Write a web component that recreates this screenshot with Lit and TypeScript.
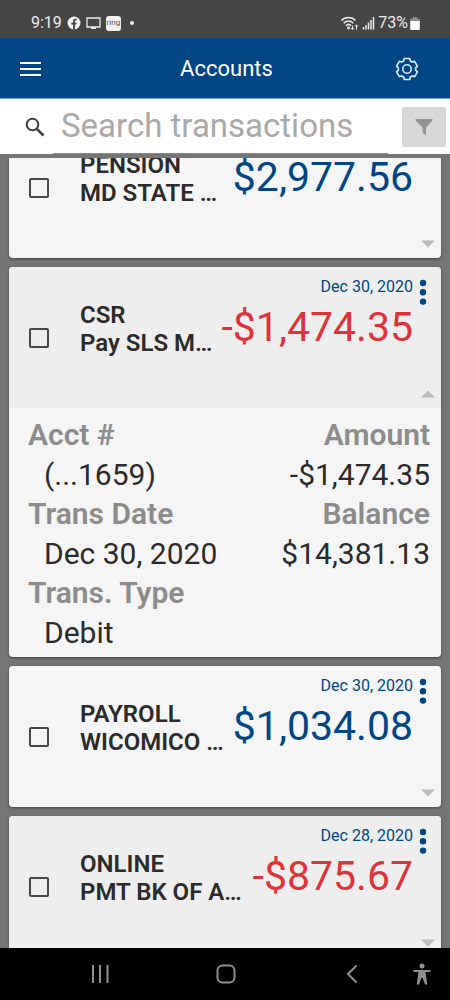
import { LitElement, html, svg, css, nothing } from "lit";
import { customElement, property, query } from "lit/decorators.js";
import { classMap } from "lit/directives/class-map.js";

interface Detail {
  label: string;
  value: string;
}

interface Transaction {
  id: string;
  title: string;
  memo: string;
  date: string;
  amount: string;
  details?: Detail[];
}

const TRANSACTIONS: Transaction[] = [
  { id: "t1", title: "PENSION", memo: "MD STATE …", date: "Dec 31, 2020", amount: "$2,977.56" },
  {
    id: "t2",
    title: "CSR",
    memo: "Pay SLS M…",
    date: "Dec 30, 2020",
    amount: "-$1,474.35",
    details: [
      { label: "Acct #", value: "(...1659)" },
      { label: "Amount", value: "-$1,474.35" },
      { label: "Trans Date", value: "Dec 30, 2020" },
      { label: "Balance", value: "$14,381.13" },
      { label: "Trans. Type", value: "Debit" },
    ],
  },
  { id: "t3", title: "PAYROLL", memo: "WICOMICO …", date: "Dec 30, 2020", amount: "$1,034.08" },
  { id: "t4", title: "ONLINE", memo: "PMT BK OF A…", date: "Dec 28, 2020", amount: "-$875.67" },
];

/* Outline of a six-toothed gear on a 24-unit grid. */
function gearPath(): string {
  const points: string[] = [];
  const teeth = 6;
  const step = (Math.PI * 2) / teeth;
  for (let i = 0; i < teeth; i++) {
    const mid = i * step - Math.PI / 2;
    const corners: [number, number][] = [
      [-0.4, 8.7],
      [-0.26, 10.8],
      [0.26, 10.8],
      [0.4, 8.7],
    ];
    for (const [offset, radius] of corners) {
      const x = 12 + Math.cos(mid + offset) * radius;
      const y = 12 + Math.sin(mid + offset) * radius;
      points.push(`${x.toFixed(2)} ${y.toFixed(2)}`);
    }
  }
  return `M${points.join("L")}Z`;
}

@customElement("status-bar")
class StatusBar extends LitElement {
  static styles = css`
    :host {
      display: flex;
      align-items: center;
      justify-content: space-between;
      height: 38px;
      box-sizing: border-box;
      padding: 8px 30px 0 31px;
      background: #454545;
      color: #ececec;
      font-size: 16px;
      line-height: 20px;
    }
    .group {
      display: flex;
      align-items: center;
    }
    .left {
      gap: 5px;
    }
    .right {
      gap: 3px;
    }
    .level {
      display: flex;
      align-items: center;
      gap: 2px;
    }
    .ring {
      width: 15px;
      height: 15px;
      border-radius: 3px;
      background: #f2f2f2;
      color: #555;
      font-size: 8px;
      line-height: 14px;
      text-align: center;
    }
    .dot {
      width: 4px;
      height: 4px;
      margin-left: 4px;
      border-radius: 50%;
      background: #f2f2f2;
    }
    svg {
      display: block;
    }
  `;
  render() {
    return html`
      <div class="group left">
        <span>9:19</span>
        <svg width="14" height="14" viewBox="0 0 14 14">
          <circle cx="7" cy="7" r="6.5" fill="#f2f2f2" />
          <path d="M6 13.6V8.6H4.3V6.7H6V5.3C6 3.6 7 2.8 8.4 2.8h1.3v1.7h-.9c-.7 0-.9.4-.9.9v1.3h1.7l-.3 1.9H7.9v5z" fill="#454545" />
        </svg>
        <svg width="15" height="14" viewBox="0 0 15 14">
          <path d="M1 2h13v9H1zM5 12.4h5" fill="none" stroke="#ececec" stroke-width="1.3" />
        </svg>
        <div class="ring">ring</div>
        <div class="dot"></div>
      </div>
      <div class="group right">
        <svg width="18" height="15" viewBox="0 0 18 15">
          <g fill="none" stroke="#ececec" stroke-width="1.500">
            <path d="M.5 4.400C4.200 .6 10.800 .6 14.500 4.400M2.700 7.200c2.800-2.800 6.800-2.800 9.600 0M4.900 9.700c1.500-1.500 3.700-1.500 5.200 0" />
          </g>
          <circle cx="7.500" cy="12" r="1.400" fill="#ececec" />
          <path d="M11.500 9.500v4M10 12l1.500 1.800L13 12M15.500 13.500V9M14 10.600l1.500-1.800 1.500 1.800" fill="none" stroke="#ececec" />
        </svg>
        <svg width="13" height="14" viewBox="0 0 13 14">
          <path d="M1.500 11v2.500M4 9v4.500M6.500 6.500v7M9 4v9.500M11.500 1v12.500" stroke="#ececec" stroke-width="1.500" />
        </svg>
        <div class="level">
          <span>73%</span>
          <svg width="10" height="15" viewBox="0 0 10 15">
            <path d="M3 1h4v1.500h2a.8.8 0 01.8.8V6H.2V3.300a.8.8 0 01.8-.8h2z" fill="#8b8b8b" />
            <path d="M.2 5h9.600v8.200a.8.8 0 01-.8.8H1a.8.8 0 01-.8-.8z" fill="#fff" />
          </svg>
        </div>
      </div>
    `;
  }
}

@customElement("title-bar")
class TitleBar extends LitElement {
  static styles = css`
    :host {
      display: grid;
      grid-template-columns: 1fr auto 1fr;
      align-items: center;
      height: 61px;
      box-sizing: border-box;
      padding: 2px 31px 0 20px;
      background: #004684;
      border-bottom: 1px solid #6f9cc2;
      color: #fff;
    }
    h1 {
      margin: 0;
      padding-left: 14px;
      font-size: 22px;
      line-height: 28px;
      font-weight: 400;
    }
    button {
      padding: 0;
      border: 0;
      background: none;
    }
    .settings {
      justify-self: end;
    }
    .menu {
      justify-self: start;
    }
    svg {
      display: block;
    }
  `;
  render() {
    return html`
      <button class="menu" aria-label="Menu">
        <svg width="21" height="16" viewBox="0 0 21 16">
          <path d="M0 2h21M0 8h21M0 14h21" stroke="#fff" stroke-width="2" />
        </svg>
      </button>
      <h1>Accounts</h1>
      <button class="settings" aria-label="Settings">
        <svg width="24" height="24" viewBox="0 0 24 24" fill="none" stroke="#d9efff" stroke-width="1.600" stroke-linejoin="round">
          <path d=${gearPath()} />
          <circle cx="12" cy="12" r="4.200" />
        </svg>
      </button>
    `;
  }
}

@customElement("search-bar")
class SearchBar extends LitElement {
  static styles = css`
    :host {
      display: flex;
      align-items: center;
      height: 59px;
      box-sizing: border-box;
      padding: 0 4px 0 25px;
      background: #fff;
      border-bottom: 4px solid #757575;
    }
    label {
      flex: none;
      width: 28px;
    }
    svg {
      display: block;
    }
    input {
      flex: 1;
      min-width: 0;
      align-self: stretch;
      box-sizing: border-box;
      margin-right: 14px;
      padding: 0 8px 2px;
      border: 0;
      border-bottom: 1px solid #8a8a8a;
      border-radius: 0;
      outline: 0;
      background: none;
      color: #333;
      font: inherit;
      font-size: 33px;
    }
    input::placeholder {
      color: #a9a9a9;
      opacity: 1;
    }
    button {
      display: grid;
      place-items: center;
      width: 44px;
      height: 40px;
      padding: 0;
      border: 0;
      border-radius: 2px;
      background: #d5d8d7;
    }
  `;
  render() {
    return html`
      <label for="search" aria-label="Search">
        <svg width="20" height="20" viewBox="0 0 20 20" fill="none" stroke="#3c3c3c">
          <circle cx="7.500" cy="7.500" r="5.800" stroke-width="2" />
          <path d="M11.800 11.800L18.500 18.500" stroke-width="2.500" />
        </svg>
      </label>
      <input id="search" type="text" placeholder="Search transactions" />
      <button aria-label="Filter">
        <svg width="18" height="18" viewBox="0 0 18 18">
          <path d="M.5 1h17v1.500L11 9.500V17.500L7.500 14.500v-5L.5 2.500z" fill="#929594" />
        </svg>
      </button>
    `;
  }
}

@customElement("transaction-card")
class TransactionCard extends LitElement {
  @property({ attribute: false }) item!: Transaction;
  @property({ type: Boolean }) shaded = false;

  static styles = css`
    :host {
      display: block;
      flex: none;
      overflow: hidden;
      border-radius: 4px;
      background: #f5f5f5;
      box-shadow: 0 1px 3px rgba(0, 0, 0, 0.45);
    }
    .head {
      display: grid;
      grid-template-columns: 51px minmax(0, 1fr) auto 28px;
      height: 141px;
      padding-left: 20px;
    }
    .shaded {
      background: #eeeeee;
    }
    input {
      appearance: none;
      align-self: center;
      width: 20px;
      height: 20px;
      margin: 0;
      border: 2px solid #484848;
      border-radius: 2px;
    }
    .name {
      padding-top: 34px;
      color: #2b2b2b;
      font-size: 24px;
      line-height: 28px;
      font-weight: 600;
      white-space: nowrap;
    }
    .name span {
      display: block;
    }
    .sum {
      display: flex;
      flex-direction: column;
      align-items: flex-end;
      padding-top: 10px;
      color: #004684;
    }
    .date {
      font-size: 16px;
      line-height: 20px;
    }
    .amount {
      font-size: 41px;
      line-height: 60px;
    }
    .debit {
      color: #de3338;
    }
    .side {
      display: flex;
      flex-direction: column;
      justify-content: space-between;
      align-items: flex-end;
      padding: 12px 6px 10px 0;
    }
    button {
      padding: 0;
      border: 0;
      background: none;
    }
    .more {
      margin-right: 8px;
    }
    svg {
      display: block;
    }
    dl {
      display: grid;
      grid-template-columns: 1fr 1fr;
      margin: 0;
      padding: 7px 11px 5px 19px;
      font-size: 30px;
    }
    .pair:nth-child(even) {
      text-align: right;
    }
    dt {
      color: #8c8c8c;
      line-height: 40px;
      font-weight: 600;
    }
    dd {
      margin: 0;
      color: #2b2b2b;
      line-height: 39px;
    }
    .pair:nth-child(odd) dd {
      padding-left: 16px;
    }
  `;

  render() {
    const { id, title, memo, date, amount, details } = this.item;
    const arrow = details ? svg`<path d="M0 7.500L7 .5L14 7.500z" fill="#bcbcbc" />` : svg`<path d="M0 .5h14L7 7.500z" fill="#bcbcbc" />`;
    return html`
      <div class=${classMap({ head: true, shaded: this.shaded })}>
        <input type="checkbox" id=${id} aria-label=${title} />
        <label class="name" for=${id}><span>${title}</span><span>${memo}</span></label>
        <div class="sum">
          <span class="date">${date}</span>
          <span class=${classMap({ amount: true, debit: amount.startsWith("-") })}>${amount}</span>
        </div>
        <div class="side">
          <button class="more" aria-label="More">
            <svg width="8" height="26" viewBox="0 0 8 26" fill="#004684">
              <circle cx="4" cy="4" r="3.200" /><circle cx="4" cy="13.300" r="3.200" /><circle cx="4" cy="22.600" r="3.200" />
            </svg>
          </button>
          <button aria-label="Toggle details">
            <svg width="14" height="8" viewBox="0 0 14 8">${arrow}</svg>
          </button>
        </div>
      </div>
      ${details
        ? html`<dl>
            ${details.map((d) => html`<div class="pair"><dt>${d.label}</dt><dd>${d.value}</dd></div>`)}
          </dl>`
        : nothing}
    `;
  }
}

@customElement("nav-bar")
class NavBar extends LitElement {
  static styles = css`
    :host {
      display: grid;
      grid-template-columns: 200fr 52fr 198fr;
      align-items: center;
      height: 52px;
      background: #000;
    }
    .end {
      display: flex;
      align-items: center;
      justify-content: flex-end;
      gap: 55px;
      padding-right: 19px;
    }
    button {
      justify-self: center;
      padding: 0;
      border: 0;
      background: none;
    }
    svg {
      display: block;
      fill: none;
      stroke: #8f8f8f;
      stroke-width: 2;
    }
  `;
  render() {
    return html`
      <button aria-label="Recent apps">
        <svg width="18" height="20" viewBox="0 0 18 20"><path d="M2 1v18M9 1v18M16.500 1v18" /></svg>
      </button>
      <button aria-label="Home">
        <svg width="20" height="20" viewBox="0 0 20 20"><rect x="1.500" y="1.500" width="17" height="17" rx="5" /></svg>
      </button>
      <div class="end">
        <button aria-label="Back">
          <svg width="12" height="20" viewBox="0 0 12 20"><path d="M10.500 1.500L2 10l8.500 8.500" /></svg>
        </button>
        <button aria-label="Accessibility">
          <svg width="18" height="22" viewBox="0 0 18 22">
            <g fill="#8f8f8f" stroke="none">
              <circle cx="9" cy="3" r="2.500" />
              <path d="M.5 7h17v2h-5L14.300 21.500h-2.300L9.700 15H8.300L6 21.500H3.700L5.500 9h-5z" />
            </g>
          </svg>
        </button>
      </div>
    `;
  }
}

@customElement("app-root")
class AppRoot extends LitElement {
  @query(".list") list!: HTMLElement;

  static styles = css`
    :host {
      display: flex;
      flex-direction: column;
      height: 100vh;
      font-family: Roboto, "Liberation Sans", sans-serif;
      background: #757575;
    }
    status-bar,
    title-bar,
    search-bar,
    nav-bar {
      flex: none;
    }
    .list {
      display: flex;
      flex: 1;
      flex-direction: column;
      gap: 9px;
      min-height: 0;
      overflow-y: auto;
      scrollbar-width: none;
      padding: 9px;
    }
  `;

  async firstUpdated() {
    const cards = [...this.list.querySelectorAll("transaction-card")] as TransactionCard[];
    await Promise.all(cards.map((card) => card.updateComplete));
    this.list.scrollTop = 50;
  }

  render() {
    return html`
      <status-bar></status-bar>
      <title-bar></title-bar>
      <search-bar></search-bar>
      <main class="list">
        ${TRANSACTIONS.map((t, i) => html`<transaction-card .item=${t} ?shaded=${i % 2 === 1}></transaction-card>`)}
      </main>
      <nav-bar></nav-bar>
    `;
  }
}
